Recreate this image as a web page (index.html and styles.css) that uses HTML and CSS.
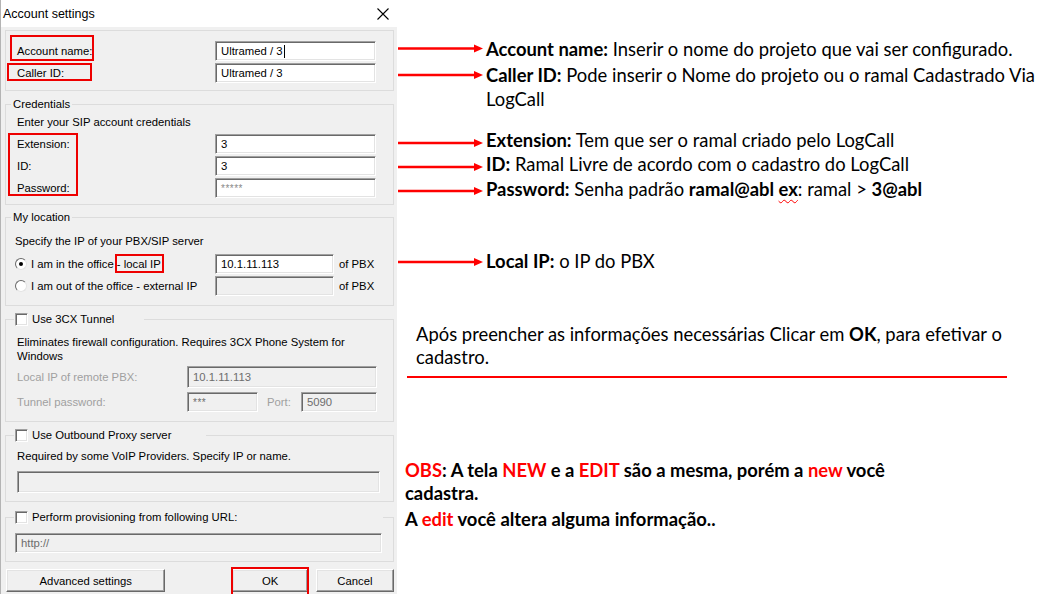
FILE: index.html
```html
<!DOCTYPE html>
<html lang="pt">
<head>
    <meta charset="UTF-8">
    <title>Account settings</title>
    <link rel="stylesheet" href="styles.css">
</head>
<body>
<div class="page">
    <div class="dialog">
        <div class="titlebar">
            <span class="title">Account settings</span>
            <svg class="close" width="12" height="12" viewBox="0 0 12 12"><path d="M0.5 0.5 L11.5 11.5 M11.5 0.5 L0.5 11.5" stroke="#000" stroke-width="1.1" fill="none"/></svg>
        </div>

        <div class="dialog-body">
            <fieldset class="group g-account">
                <div class="rows">
                    <span class="lbl mark mark-account">Account name:</span>
                    <div class="field">Ultramed / 3<span class="caret"></span></div>
                    <span class="lbl mark mark-caller">Caller ID:</span>
                    <div class="field">Ultramed / 3</div>
                </div>
            </fieldset>

            <fieldset class="group g-cred">
                <legend>Credentials</legend>
                <p class="hint">Enter your SIP account credentials</p>
                <div class="rows">
                    <span class="lbl mark mark-cred">Extension:</span>
                    <div class="field">3</div>
                    <span class="lbl">ID:</span>
                    <div class="field">3</div>
                    <span class="lbl">Password:</span>
                    <div class="field stars">*****</div>
                </div>
            </fieldset>

            <fieldset class="group g-loc">
                <legend>My location</legend>
                <p class="hint">Specify the IP of your PBX/SIP server</p>
                <div class="loc-rows">
                    <span class="opt"><span class="radio checked"></span>I am in the office <span class="mark mark-ip">- local IP</span></span>
                    <div class="field">10.1.11.113</div>
                    <span class="suffix">of PBX</span>
                    <span class="opt"><span class="radio"></span>I am out of the office - external IP</span>
                    <div class="field off"></div>
                    <span class="suffix">of PBX</span>
                </div>
            </fieldset>

            <fieldset class="group g-tunnel">
                <legend><span class="check"></span>Use 3CX Tunnel</legend>
                <p class="hint two">Eliminates firewall configuration. Requires 3CX Phone System for Windows</p>
                <div class="tunnel-rows">
                    <span class="lbl dim">Local IP of remote PBX:</span>
                    <div class="field off wide">10.1.11.113</div>
                    <span class="lbl dim">Tunnel password:</span>
                    <div class="field off short stars">***</div>
                    <span class="lbl dim port">Port:</span>
                    <div class="field off port-field">5090</div>
                </div>
            </fieldset>

            <fieldset class="group g-proxy">
                <legend><span class="check"></span>Use Outbound Proxy server</legend>
                <p class="hint">Required by some VoIP Providers. Specify IP or name.</p>
                <div class="field off full"></div>
            </fieldset>

            <fieldset class="group g-prov">
                <legend><span class="check"></span>Perform provisioning from following URL:</legend>
                <div class="field off full url">http://</div>
            </fieldset>

            <div class="buttons">
                <button class="btn btn-adv">Advanced settings</button>
                <button class="btn btn-ok mark mark-ok">OK</button>
                <button class="btn btn-cancel">Cancel</button>
            </div>
        </div>
    </div>

    <div class="notes">
        <div class="note n1">
            <svg class="arrow" width="85" height="24" viewBox="0 0 85 24"><line x1="0" y1="11.5" x2="78" y2="11.5" stroke="#f00" stroke-width="2.4"/><path d="M76 7.5 L85 11.5 L76 15.5 Z" fill="#f00"/></svg>
            <p><b>Account name:</b> Inserir o nome do projeto que vai ser configurado.</p>
        </div>
        <div class="note n2">
            <svg class="arrow" width="85" height="24" viewBox="0 0 85 24"><line x1="0" y1="12" x2="78" y2="12" stroke="#f00" stroke-width="2.4"/><path d="M76 8 L85 12 L76 16 Z" fill="#f00"/></svg>
            <p><b>Caller ID:</b> Pode inserir o Nome do projeto ou o ramal Cadastrado Via<br>LogCall</p>
        </div>
        <div class="note n3">
            <svg class="arrow" width="85" height="24" viewBox="0 0 85 24"><line x1="0" y1="15" x2="78" y2="15" stroke="#f00" stroke-width="2.4"/><path d="M76 11 L85 15 L76 19 Z" fill="#f00"/></svg>
            <p><b>Extension:</b> Tem que ser o ramal criado pelo LogCall</p>
        </div>
        <div class="note n4">
            <svg class="arrow" width="85" height="24" viewBox="0 0 85 24"><line x1="0" y1="15" x2="78" y2="15" stroke="#f00" stroke-width="2.4"/><path d="M76 11 L85 15 L76 19 Z" fill="#f00"/></svg>
            <p><b>ID:</b> Ramal Livre de acordo com o cadastro do LogCall</p>
        </div>
        <div class="note n5">
            <svg class="arrow" width="85" height="24" viewBox="0 0 85 24"><line x1="0" y1="14" x2="78" y2="14" stroke="#f00" stroke-width="2.4"/><path d="M76 10 L85 14 L76 18 Z" fill="#f00"/></svg>
            <p><b>Password:</b> Senha padrão <b>ramal@abl <span class="typo">ex</span></b>: ramal &gt; <b>3@abl</b></p>
        </div>
        <div class="note n6">
            <svg class="arrow" width="85" height="24" viewBox="0 0 85 24"><line x1="0" y1="13" x2="78" y2="13" stroke="#f00" stroke-width="2.4"/><path d="M76 9 L85 13 L76 17 Z" fill="#f00"/></svg>
            <p><b>Local IP:</b> o IP do PBX</p>
        </div>

        <p class="after">Após preencher as informações necessárias Clicar em <b>OK</b>, para efetivar o<br>cadastro.</p>
        <div class="rule"></div>

        <div class="obs">
            <p><span class="red">OBS</span>: A tela <span class="red">NEW</span> e a <span class="red">EDIT</span> são a mesma, porém a <span class="red">new</span> você<br>cadastra.</p>
            <p class="last">A <span class="red">edit</span> você altera alguma informação..</p>
        </div>
    </div>
</div>
</body>
</html>
```

FILE: styles.css
```css
:root {
    --face: #f0f0f0;
    --line: #dcdcdc;
    --shadow: #a0a0a0;
    --dark: #696969;
    --light: #e3e3e3;
    --mark: #ee0000;
    --red: #ff0000;
}

body {
    margin: 0;
    background: #fff;
    font-family: 'Liberation Sans', Arial, sans-serif;
    color: #000;
}

.page {
    display: flex;
    align-items: flex-start;
    width: 1055px;
    height: 594px;
    overflow: hidden;
}

/* ---- dialog ---- */

.dialog {
    flex: none;
    width: 397px;
    height: 594px;
    box-sizing: border-box;
    background: var(--face);
    border-left: 1px solid #b4b4b4;
}

.titlebar {
    height: 27px;
    background: #fff;
    display: flex;
    align-items: center;
    justify-content: space-between;
    padding: 0 8px 0 2px;
    font-size: 12.5px;
}

.close {
    margin-top: 1px;
}

.dialog-body {
    padding: 3px 3px 0 4px;
    font-size: 11.3px;
}

.group {
    --pad: 11px;
    margin: 7px 0 0;
    padding: 0 0 8px 0;
    border: 1px solid var(--line);
    min-width: 0;
    position: relative;
}

.group > :not(legend) {
    margin-left: var(--pad);
}

.group legend {
    padding: 0 2px;
    margin-left: 5px;
    line-height: 13px;
    display: flex;
    align-items: center;
    white-space: nowrap;
}

.hint {
    margin: 0;
    line-height: 13px;
}

.rows {
    display: grid;
    grid-template-columns: 198px 161px;
    row-gap: 2px;
    align-items: center;
}

.lbl {
    position: relative;
    line-height: 13px;
}

.field {
    height: 20px;
    box-sizing: border-box;
    background: #fff;
    border: 1px solid;
    border-color: var(--shadow) #fff #fff var(--shadow);
    box-shadow: inset 1px 1px 0 var(--dark), inset -1px -1px 0 var(--light);
    padding: 0 5px;
    display: flex;
    align-items: center;
    white-space: nowrap;
}

.field.off {
    background: var(--face);
    color: #6d6d6d;
}

.stars {
    color: #8a8a8a;
    font-size: 10px;
    letter-spacing: 0.5px;
}

.caret {
    display: inline-block;
    width: 1px;
    height: 13px;
    background: #000;
    margin-left: 1px;
}

.g-account {
    margin-top: 0;
    padding-top: 10px;
    padding-bottom: 7px;
}

.g-cred {
    margin-top: 7px;
    padding-top: 5px;
    padding-bottom: 6px;
}

.g-cred .rows {
    margin-top: 5px;
}

.g-loc {
    --pad: 9px;
    margin-top: 6px;
    padding-top: 11px;
    padding-bottom: 9px;
}

.loc-rows {
    margin-top: 6px;
    display: grid;
    grid-template-columns: 195px 119px auto;
    column-gap: 5px;
    row-gap: 2px;
    align-items: center;
}

.opt {
    display: flex;
    align-items: center;
    white-space: pre;
}

.radio {
    width: 12px;
    height: 12px;
    box-sizing: border-box;
    border-radius: 50%;
    background: #fff;
    border: 1px solid;
    border-color: var(--dark) var(--light) var(--light) var(--dark);
    margin-right: 4px;
    position: relative;
}

.radio.checked::after {
    content: "";
    position: absolute;
    left: 3px;
    top: 3px;
    width: 4px;
    height: 4px;
    border-radius: 50%;
    background: #000;
}

.check {
    flex: none;
    width: 13px;
    height: 13px;
    box-sizing: border-box;
    background: #fff;
    border: 1px solid;
    border-color: var(--shadow) #fff #fff var(--shadow);
    box-shadow: inset 1px 1px 0 var(--dark), inset -1px -1px 0 var(--light);
    margin-right: 4px;
}

.g-tunnel legend,
.g-proxy legend,
.g-prov legend {
    margin-left: 8px;
    padding: 0 30px 0 1px;
}

.g-proxy legend {
    padding-right: 35px;
}

.g-prov legend {
    padding-right: 146px;
}

.g-tunnel {
    padding-top: 9px;
    padding-bottom: 9px;
}

.hint.two {
    line-height: 14px;
    width: 340px;
}

.dim {
    color: #a0a0a0;
}

.tunnel-rows {
    margin-top: 3px;
    display: grid;
    grid-template-columns: 170px 71px 43px 76px;
    grid-template-rows: 22px 20px;
    row-gap: 4px;
    align-items: center;
}

.tunnel-rows .wide {
    grid-column: 2 / 5;
    height: 22px;
}

.port {
    padding-left: 9px;
}

.g-proxy {
    padding: 8px 13px 8px 0;
}

.g-proxy .full {
    margin-top: 8px;
    height: 22px;
}

.g-prov {
    --pad: 9px;
    margin-top: 9px;
    padding: 9px 0 8px 0;
}

.url {
    height: 20px;
    margin-right: 11px;
}

.buttons {
    display: flex;
    margin-top: 7px;
}

.btn {
    font: inherit;
    height: 23px;
    background: var(--face);
    border: 1px solid;
    border-color: #fff var(--dark) var(--dark) #fff;
    box-shadow: inset -1px -1px 0 var(--shadow), inset 1px 1px 0 var(--light);
    padding: 0;
    color: #000;
}

.btn-adv {
    width: 161px;
    margin-left: 1px;
}

.btn-ok {
    width: 76px;
    margin-left: 67px;
}

.btn-cancel {
    width: 79px;
    margin-left: 8px;
}

/* red highlight boxes drawn over the dialog */

.mark {
    position: relative;
}

.mark::after {
    content: "";
    position: absolute;
    border: 2px solid var(--mark);
}

.mark-account::after {
    left: -7px;
    top: -10px;
    width: 80px;
    height: 22px;
}

.mark-caller::after {
    left: -10px;
    top: -4px;
    width: 81px;
    height: 14px;
}

.mark-cred::after {
    left: -9px;
    top: -5px;
    width: 66px;
    height: 59px;
}

.mark-ip::after {
    left: -2px;
    top: -4px;
    right: -3px;
    bottom: -3px;
}

.mark-ok::after {
    left: -2px;
    top: -3px;
    width: 74px;
    height: 30px;
}

/* ---- annotations ---- */

.notes {
    flex: 1;
    padding-top: 37px;
    font-family: Lato, 'Liberation Sans', sans-serif;
    font-size: 18.4px;
    color: #000;
}

.notes p {
    margin: 0;
}

.note {
    display: flex;
    align-items: flex-start;
    line-height: 24px;
}

.arrow {
    flex: none;
    margin-left: 1px;
    margin-right: 3px;
}

.n2 { margin-top: 2px; }
.n3 { margin-top: 17px; }
.n5 { margin-top: 1px; }
.n6 { margin-top: 48px; }

.typo {
    text-decoration: underline wavy var(--red);
    text-decoration-thickness: 1px;
    text-underline-offset: 3px;
}

.after {
    margin: 50px 0 0 19px !important;
    line-height: 23px;
}

.rule {
    margin: 7px 0 0 10px;
    width: 600px;
    height: 2px;
    background: var(--red);
}

.obs {
    margin: 81px 0 0 8px;
    font-weight: bold;
    line-height: 23px;
}

.obs .last {
    margin-top: 3px;
}

.red {
    color: var(--red);
}
```
